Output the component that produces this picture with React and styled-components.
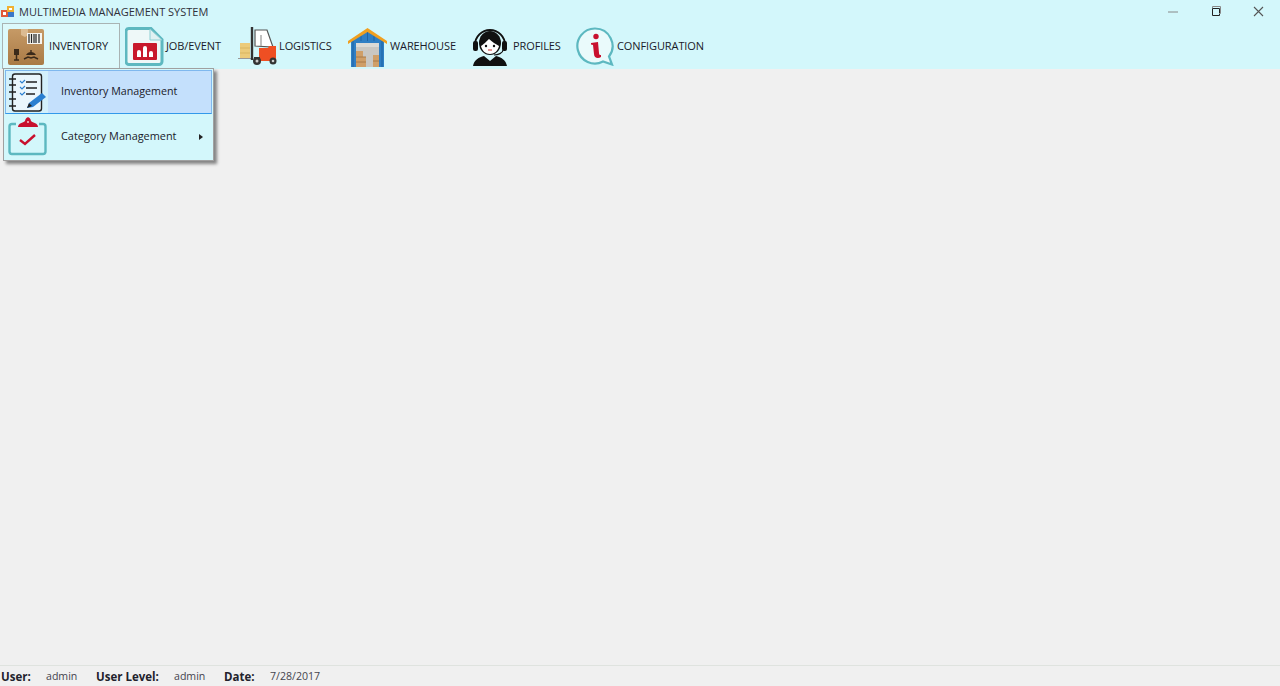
import React from "react";
import styled, { createGlobalStyle } from "styled-components";

const Global = createGlobalStyle`
  html, body { margin: 0; padding: 0; height: 100%; overflow: hidden; }
  #root { height: 100%; }
  * { box-sizing: border-box; }
`;
const Page = styled.div`
  width: 1280px;
  height: 686px;
  display: flex;
  flex-direction: column;
  background: #f0f0f0;
  font-family: "Open Sans", "Noto Sans", sans-serif;
  color: #1a1a2a;
  position: relative;
`;
const TitleBar = styled.div`
  height: 23px;
  display: flex;
  align-items: center;
  background: #d3f7fb;
  font-size: 11px;
  padding-left: 1px;
`;
const TitleText = styled.span`
  margin-left: 4px;
  flex: 1;
  color: #30303a;
`;
const WinButtons = styled.div`
  display: flex;
  align-items: center;
`;
const WinButton = styled.div`
  width: 43px;
  height: 23px;
  display: flex;
  align-items: center;
  justify-content: center;
`;
const MenuStrip = styled.div`
  height: 46px;
  display: flex;
  align-items: stretch;
  background: #d3f7fb;
  padding-left: 2px;
`;
const MenuItem = styled.div`
  display: flex;
  align-items: center;
  width: ${(p) => p.$w}px;
  padding-left: ${(p) => p.$pad}px;
  gap: ${(p) => p.$gap}px;
  font-size: 11px;
  letter-spacing: -0.1px;
  border: 1px solid ${(p) => (p.$open ? "#a9b3b3" : "transparent")};
  border-bottom: none;
  background: ${(p) => (p.$open ? "#dcf9fb" : "transparent")};
`;
const MenuLabel = styled.span`
  padding-bottom: 2px;
`;
const Content = styled.div`
  flex: 1;
  background: #f0f0f0;
`;
const StatusBar = styled.div`
  height: 21px;
  display: flex;
  align-items: center;
  border-top: 1px solid #dfe3df;
  padding-left: 1px;
`;
const StatusLabel = styled.span`
  font-size: 11.5px;
  font-weight: 700;
  width: ${(p) => p.$w}px;
  color: #22222c;
`;
const StatusValue = styled.span`
  width: ${(p) => p.$w}px;
  color: #44444e;
  font-size: 10.6px;
`;
const Dropdown = styled.div`
  position: absolute;
  left: 3px;
  top: 68px;
  width: 211px;
  height: 93px;
  background: #d3f7fb;
  border: 1px solid #a0a0a0;
  padding: 1px;
  box-shadow: 3px 3px 3px rgba(0, 0, 0, 0.45);
  display: flex;
  flex-direction: column;
`;
const DropRow = styled.div`
  height: ${(p) => p.$h}px;
  display: flex;
  align-items: center;
  font-size: ${(p) => (p.$active ? "10.7px" : "10.9px")};
  background: ${(p) => (p.$active ? "#c4e0fc" : "transparent")};
  border: 1px solid ${(p) => (p.$active ? "#7fb8ee" : "transparent")};
  border-bottom-color: ${(p) => (p.$active ? "#3399ea" : "transparent")};
`;
const DropIcon = styled.div`
  width: 42px;
  height: 100%;
  flex: none;
  display: flex;
  align-items: center;
  justify-content: center;
  background: ${(p) => (p.$active ? "#d3f0fb" : "transparent")};
`;
const DropLabel = styled.span`
  margin-left: 13px;
  padding-bottom: ${(p) => (p.$active ? "3px" : "2px")};
  flex: 1;
`;
const Arrow = styled.span`
  width: 0;
  height: 0;
  margin-right: 8px;
  border-left: 4px solid #222;
  border-top: 3px solid transparent;
  border-bottom: 3px solid transparent;
`;

const AppIcon = () => (
  <svg width="14" height="14" viewBox="0 0 14 14">
    <rect x="0" y="5" width="7" height="7" fill="#e05a3a" />
    <rect x="6" y="1" width="7" height="6" fill="#f0b030" />
    <rect x="7" y="7" width="6" height="5" fill="#3a78c8" />
    <rect x="2" y="7" width="3" height="3" fill="#fff" />
    <rect x="8" y="3" width="3" height="2" fill="#fff" />
  </svg>
);

const BoxIcon = () => (
  <svg width="36" height="38" viewBox="0 0 36 38">
    <defs>
      <linearGradient id="carton" x1="0" y1="0" x2="0" y2="1">
        <stop offset="0" stopColor="#c69a66" />
        <stop offset="1" stopColor="#a97a45" />
      </linearGradient>
    </defs>
    <rect x="0" y="1" width="36" height="36" rx="2" fill="url(#carton)" />
    <path d="M13 1h7v6l-3 2-4-2z" fill="#dcbb92" />
    <rect x="19" y="5" width="15" height="11" fill="#f6f4ef" />
    <path d="M21 6v9M23.5 6v9M26 6v9M28 6v9M31 6v9" stroke="#222" strokeWidth="1.2" />
    <path d="M6 21h5v6H6z" fill="#3a2a1a" />
    <path d="M8.500 27v5M6 32h5" stroke="#3a2a1a" strokeWidth="1.5" />
    <path d="M18 27c2-4 8-4 10 0z" fill="#3a2a1a" />
    <path d="M23 22v3M16 31l4-2 3 1 3-1 4 2" stroke="#3a2a1a" strokeWidth="1.4" fill="none" />
  </svg>
);
const ReportIcon = () => (
  <svg width="39" height="39" viewBox="0 0 39 39">
    <path d="M4 1.500h22l11 11v22a3 3 0 0 1-3 3H4a3 3 0 0 1-3-3V4a3 3 0 0 1 3-2.500z" fill="#eef8f8" stroke="#5db8c0" strokeWidth="3" />
    <path d="M25 2v11h12z" fill="#dff1f2" stroke="#8fced3" strokeWidth="1" />
    <rect x="8" y="16" width="24" height="17" rx="1" fill="#c8192c" />
    <path d="M12 30v-5a1.500 1.500 0 0 1 4 0v5zM18 30v-9a1.500 1.500 0 0 1 4 0v9zM24 30v-4a1.500 1.500 0 0 1 4 0v4z" fill="#fff" />
  </svg>
);
const ForkliftIcon = () => (
  <svg width="39" height="39" viewBox="0 0 39 39">
    <rect x="2" y="16" width="10" height="15" fill="#eccb7a" />
    <path d="M2 21h10M2 26h10" stroke="#d9b561" strokeWidth="1" />
    <path d="M0 31.500h13" stroke="#999" strokeWidth="1" />
    <path d="M14 0v33" stroke="#333" strokeWidth="2.4" />
    <path d="M17 19V3h12l6 17z" fill="#fff" stroke="#555" strokeWidth="1.2" />
    <path d="M23 19V8" stroke="#aaa" strokeWidth="1.500" />
    <path d="M21 21h9l1-2h7v15H21z" fill="#ef4f23" />
    <path d="M16 31h6" stroke="#333" strokeWidth="2" />
    <circle cx="19" cy="34" r="4" fill="#333" />
    <circle cx="19" cy="34" r="1.500" fill="#ccc" />
    <circle cx="35" cy="34" r="3.500" fill="#333" />
    <circle cx="35" cy="34" r="1.300" fill="#ccc" />
  </svg>
);
const WarehouseIcon = () => (
  <svg width="39" height="40" viewBox="0 0 39 40">
    <path d="M3 13L19.500 3 36 13v27H3z" fill="#2f7fc4" />
    <path d="M5 14v26M34 14v26M19.500 4v10M13 8v6M26 8v6" stroke="#1f64a4" strokeWidth="1" />
    <path d="M0 14L19.500 1 39 14v3L19.500 5 0 17z" fill="#f0a020" />
    <rect x="8" y="16" width="23" height="24" fill="#c9c7c2" />
    <path d="M8 16h23v4H8z" fill="#dbdad6" />
    <path d="M8 24h7v6H8zM8 30h10v10H8zM25 28h6v12h-6z" fill="#cf9f68" />
    <path d="M8 30h10M8 35h10M25 34h6" stroke="#a87a48" strokeWidth="1" />
  </svg>
);
const AgentIcon = () => (
  <svg width="36" height="39" viewBox="0 0 36 39">
    <path d="M3 18a15 15 0 0 1 30 0" fill="none" stroke="#111" strokeWidth="2" />
    <rect x="1" y="14" width="5" height="10" rx="2" fill="#111" />
    <rect x="30" y="14" width="5" height="10" rx="2" fill="#111" />
    <ellipse cx="18" cy="16" rx="11" ry="12" fill="#111" />
    <path d="M9 19c2-1 6-5 8-7 3 3 7 5 10 7-1 5-5 8-9 8s-8-3-9-8z" fill="#fff" />
    <circle cx="14" cy="19" r="1.200" fill="#111" />
    <circle cx="22" cy="19" r="1.200" fill="#111" />
    <path d="M16 23h4" stroke="#c33" strokeWidth="1" />
    <path d="M31 23c0 3-5 5-9 5" fill="none" stroke="#111" strokeWidth="1.200" />
    <path d="M1 39c1-6 6-9 11-10l6 5 6-5c5 1 10 4 11 10z" fill="#111" />
  </svg>
);
const InfoIcon = () => (
  <svg width="39" height="39" viewBox="0 0 39 39">
    <path d="M19 1.500a17.500 17.500 0 1 0 8 33l9 3-3-8a17.500 17.500 0 0 0-14-28z" fill="#eafafb" stroke="#5db8c0" strokeWidth="2.200" />
    <circle cx="20" cy="9.500" r="2.700" fill="#c8102e" />
    <path d="M15 16l7-1 1 11c0 2 1 2 2 2v2c-3 2-7 1-7-3l-1-9-2-.5z" fill="#c8102e" />
  </svg>
);
const ChecklistIcon = () => (
  <svg width="39" height="41" viewBox="0 0 39 41">
    <rect x="4.500" y="2" width="29" height="37" rx="2.500" fill="#eaf6fc" stroke="#222" strokeWidth="1.400" />
    <path d="M1 7h7M1 13h7M1 20h7M1 27h7M1 34h7" stroke="#222" strokeWidth="1.400" />
    <path d="M12 9l2 2 3-3M12 15l2 2 3-3M12 21l2 2 3-3" stroke="#2a7fd0" strokeWidth="1.100" fill="none" />
    <path d="M18 10h11M18 16h11M18 22h9" stroke="#222" strokeWidth="1.400" />
    <path d="M19 36l2-5 13-10 4 4-13 10z" fill="#2a7fd0" />
    <path d="M19 36l2-5 3 3z" fill="#222" />
  </svg>
);
const ClipboardIcon = () => (
  <svg width="39" height="42" viewBox="0 0 39 42">
    <path d="M8 8H4a2.500 2.500 0 0 0-2.500 2.500v25A2.500 2.500 0 0 0 4 38h31a2.500 2.500 0 0 0 2.500-2.500v-25A2.500 2.500 0 0 0 35 8h-4" fill="none" stroke="#5db8c0" strokeWidth="2.400" />
    <path d="M10 11c0-4 5-4 7-6 1-5 5-5 6 0 2 2 7 2 7 6z" fill="#c8102e" />
    <circle cx="20" cy="6" r="1" fill="#f3c9cf" />
    <path d="M12 24l5 4 10-9" fill="none" stroke="#c8102e" strokeWidth="2.400" />
  </svg>
);

function App() {
  return (
    <Page>
      <Global />
      <TitleBar>
        <AppIcon />
        <TitleText>MULTIMEDIA MANAGEMENT SYSTEM</TitleText>
        <WinButtons>
          <WinButton>
            <svg width="10" height="10"><path d="M0 5h10" stroke="#888" strokeWidth="1" /></svg>
          </WinButton>
          <WinButton>
            <svg width="11" height="11"><path d="M2.500 2.500h7v7h-7z" fill="none" stroke="#222" /><path d="M2.500 2V.5h8v7H9" fill="none" stroke="#888" /></svg>
          </WinButton>
          <WinButton>
            <svg width="11" height="11"><path d="M1 1l9 9M10 1l-9 9" stroke="#555" strokeWidth="1.100" /></svg>
          </WinButton>
        </WinButtons>
      </TitleBar>
      <MenuStrip>
        <MenuItem $open $w={118} $pad={5} $gap={5}><BoxIcon /><MenuLabel>INVENTORY</MenuLabel></MenuItem>
        <MenuItem $w={113} $pad={4} $gap={2}><ReportIcon /><MenuLabel>JOB/EVENT</MenuLabel></MenuItem>
        <MenuItem $w={113} $pad={4} $gap={2}><ForkliftIcon /><MenuLabel>LOGISTICS</MenuLabel></MenuItem>
        <MenuItem $w={122} $pad={1} $gap={3}><WarehouseIcon /><MenuLabel>WAREHOUSE</MenuLabel></MenuItem>
        <MenuItem $w={106} $pad={3} $gap={5}><AgentIcon /><MenuLabel>PROFILES</MenuLabel></MenuItem>
        <MenuItem $w={150} $pad={1} $gap={2}><InfoIcon /><MenuLabel>CONFIGURATION</MenuLabel></MenuItem>
      </MenuStrip>
      <Content />
      <StatusBar>
        <StatusLabel $w={45}>User:</StatusLabel>
        <StatusValue $w={50}>admin</StatusValue>
        <StatusLabel $w={78}>User Level:</StatusLabel>
        <StatusValue $w={50}>admin</StatusValue>
        <StatusLabel $w={46}>Date:</StatusLabel>
        <StatusValue $w={70}>7/28/2017</StatusValue>
      </StatusBar>
      <Dropdown>
        <DropRow $active $h={44}>
          <DropIcon $active><ChecklistIcon /></DropIcon>
          <DropLabel $active>Inventory Management</DropLabel>
        </DropRow>
        <DropRow $h={45}>
          <DropIcon><ClipboardIcon /></DropIcon>
          <DropLabel>Category Management</DropLabel>
          <Arrow />
        </DropRow>
      </Dropdown>
    </Page>
  );
}
export default App;
